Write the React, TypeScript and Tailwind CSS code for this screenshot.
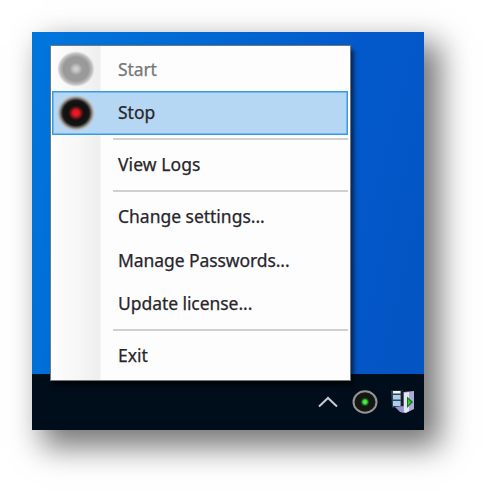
import React from 'react';

type ItemProps = { label: string; spacing: string; icon?: React.ReactNode; state?: 'disabled' | 'active' };

function RecordIcon({ active }: { active: boolean }) {
  const id = active ? 'record-active' : 'record-disabled';
  return (
    <svg viewBox="0 0 38 38" className="size-[38px]" aria-hidden="true">
      <defs>
        <radialGradient id={id}>
          {active ? (
            <>
              <stop offset="0" stopColor="#f01828" />
              <stop offset=".16" stopColor="#e01824" />
              <stop offset=".36" stopColor="#35110f" />
              <stop offset=".45" stopColor="#0c1010" />
              <stop offset=".69" stopColor="#151715" />
              <stop offset=".82" stopColor="#777573" />
              <stop offset=".9" stopColor="#b5b1ad" />
              <stop offset="1" stopColor="#b5b1ad" stopOpacity="0" />
            </>
          ) : (
            <>
              <stop offset="0" stopColor="#d5d5d5" />
              <stop offset=".14" stopColor="#c4c4c4" />
              <stop offset=".34" stopColor="#9b9b9b" />
              <stop offset=".66" stopColor="#999999" />
              <stop offset=".82" stopColor="#b8b8b8" />
              <stop offset=".92" stopColor="#d8d8d8" />
              <stop offset="1" stopColor="#eeeeee" stopOpacity="0" />
            </>
          )}
        </radialGradient>
      </defs>
      <ellipse cx="19" cy="19" rx="19" ry="18" fill={`url(#${id})`} />
    </svg>
  );
}

function MenuItem({ label, spacing, icon, state }: ItemProps) {
  return (
    <div className={`flex h-[43.5px] shrink-0 items-center ${state === 'active' ? 'bg-[#b5d7f3] shadow-[inset_0_0_0_1.5px_#349be5]' : ''} ${state === 'disabled' ? 'text-[#777]' : 'text-[#28252b]'}`}>
      <div className="flex w-[66px] shrink-0 pl-[5px]">{icon}</div>
      <span className={`whitespace-nowrap pb-px text-[17.5px] leading-6 [-webkit-text-stroke:0.25px_currentColor] ${spacing}`}>{label}</span>
    </div>
  );
}

function Separator() {
  return <div className="my-[3.5px] ml-[61px] h-[1.5px] shrink-0 bg-[#d0d0d0]" />;
}

export default function App() {
  return (
    <main className="h-[495px] w-[489px] overflow-hidden bg-white p-8 font-['Noto_Sans','Open_Sans',sans-serif]">
      <section className="relative flex h-[398px] w-[392px] flex-col bg-[#000d1b] shadow-[13px_14px_29px_3px_rgba(0,0,0,0.54)]">
        <div className="h-[342px] shrink-0 bg-[linear-gradient(105deg,#0076dd_0%,#006bd5_30%,#0359cb_68%,#0454c2_100%)]" />
        <div className="flex h-[56px] items-center justify-end pr-[8px]">
          <svg viewBox="0 0 20 12" className="mr-[14px] h-3 w-5" fill="none" stroke="#c6cbd0" strokeWidth="2" aria-hidden="true">
            <path d="M1 10.5 10 2l9 8.5" />
          </svg>
          <svg viewBox="0 0 26 26" className="mr-[12px] size-[26px]" aria-hidden="true">
            <defs>
              <radialGradient id="tray-light">
                <stop offset="0" stopColor="#66ff54" />
                <stop offset=".45" stopColor="#2ed12b" />
                <stop offset="1" stopColor="#101811" stopOpacity="0" />
              </radialGradient>
            </defs>
            <ellipse cx="13" cy="13" rx="11.5" ry="10.7" fill="#151716" stroke="#96948f" strokeWidth="2" />
            <circle cx="13" cy="13" r="5" fill="url(#tray-light)" />
          </svg>
          <svg viewBox="0 0 26 26" className="size-[26px]" aria-hidden="true">
            <path d="M1 1.5h12v17H2z" fill="#39444d" />
            <path d="M3 2h7.5v2.5H3z" fill="#edf5fa" />
            <path d="M3 6h7.5v4.5H3zM3 12h7.5v5H3z" fill="#a8cff3" />
            <path d="M11.2 2h2v15h-2z" fill="#15191e" />
            <path d="m5 18 9-1v7l-4-1z" fill="#9895c9" />
            <path d="m13.5 3 10.5-1v18l-8 4-2.5-1z" fill="#aca8d8" />
            <path d="m14 4 5-1v19l-4 2-1-1z" fill="#e6e4f3" />
            <path d="m17 7.5 6 5.5-6 6z" fill="#087b18" />
            <path d="m18 10 3 3-3 3.5z" fill="#37cb32" />
          </svg>
        </div>
        <nav className="absolute left-[18px] top-[13px] flex h-[336px] w-[301px] flex-col border border-[#777] bg-[linear-gradient(90deg,#fdfdfd_0px,#f7f7f7_25px,#eeeeee_49px,#fdfdfd_50px)] pl-px pr-[2px] pt-[1.5px] shadow-[3px_5px_4px_rgba(0,0,0,0.55)]">
          <MenuItem label="Start" spacing="tracking-[-0.1px]" state="disabled" icon={<RecordIcon active={false} />} />
          <MenuItem label="Stop" spacing="tracking-[0px]" state="active" icon={<RecordIcon active />} />
          <Separator />
          <MenuItem label="View Logs" spacing="tracking-[0.08px]" />
          <Separator />
          <MenuItem label="Change settings..." spacing="tracking-[-0.02px]" />
          <MenuItem label="Manage Passwords..." spacing="tracking-[-0.08px]" />
          <MenuItem label="Update license..." spacing="tracking-[-0.06px]" />
          <Separator />
          <MenuItem label="Exit" spacing="tracking-[0px]" />
        </nav>
      </section>
    </main>
  );
}
